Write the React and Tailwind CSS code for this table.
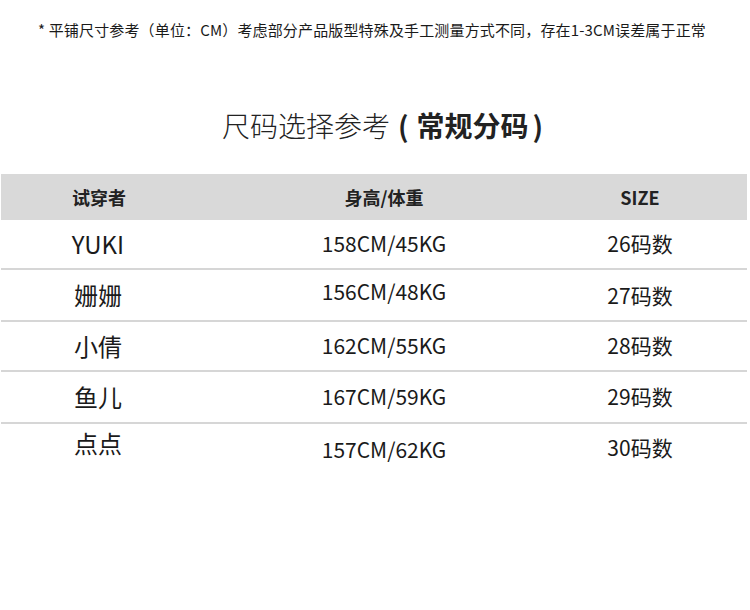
const rows = [
  { name: "YUKI", body: "158CM/45KG", size: "26码数", h: "h-[50px]", namePad: "", bodyPad: "", sizePad: "" },
  { name: "姗姗", body: "156CM/48KG", size: "27码数", h: "h-[52px]", namePad: "", bodyPad: "pb-[6px]", sizePad: "pt-[2px]" },
  { name: "小倩", body: "162CM/55KG", size: "28码数", h: "h-[50px]", namePad: "", bodyPad: "", sizePad: "" },
  { name: "鱼儿", body: "167CM/59KG", size: "29码数", h: "h-[52px]", namePad: "", bodyPad: "", sizePad: "" },
  { name: "点点", body: "157CM/62KG", size: "30码数", h: "h-[52px]", namePad: "pb-[14px]", bodyPad: "", sizePad: "pb-[4px]" },
]

export default function App() {
  return (
    <div
      className="w-[750px] h-[610px] bg-white text-[#1a1a1a] overflow-hidden"
      style={{ fontFamily: '"Noto Sans CJK SC", "Noto Sans", sans-serif' }}
    >
      <p className="pt-[19px] text-center text-[15px] leading-[22px] pr-[6px] tracking-[0.15px]">
        * 平铺尺寸参考（单位：CM）考虑部分产品版型特殊及手工测量方式不同，存在1-3CM误差属于正常
      </p>

      <h2 className="mt-[64px] text-center text-[28px] leading-[40px] font-light text-[#222] pl-[15px]">
        尺码选择参考
        <span className="font-bold ml-[8px]">(</span>
        <span className="font-bold ml-[8px]">常规分码</span>
        <span className="font-bold ml-[4px]">)</span>
      </h2>

      <div className="mt-[29px] w-[746px] ml-px">
        <div className="grid grid-cols-[194px_378px_134px] h-[46px] items-center bg-[#d9d9d9] text-[18px] font-bold text-[#222]">
          <div className="text-center pl-[2px]">试穿者</div>
          <div className="text-center">身高/体重</div>
          <div className="text-center">SIZE</div>
        </div>

        {rows.map((r, i) => (
          <div
            key={r.name}
            className={`grid grid-cols-[194px_378px_134px] items-center ${r.h} ${
              i < rows.length - 1 ? "border-b-[2px] border-[#d6d6d6]" : ""
            }`}
          >
            <div className={`text-center text-[24px] ${r.namePad}`}>{r.name}</div>
            <div className={`text-center text-[21px] ${r.bodyPad}`}>{r.body}</div>
            <div className={`text-center text-[21px] ${r.sizePad}`}>{r.size}</div>
          </div>
        ))}
      </div>
    </div>
  )
}
